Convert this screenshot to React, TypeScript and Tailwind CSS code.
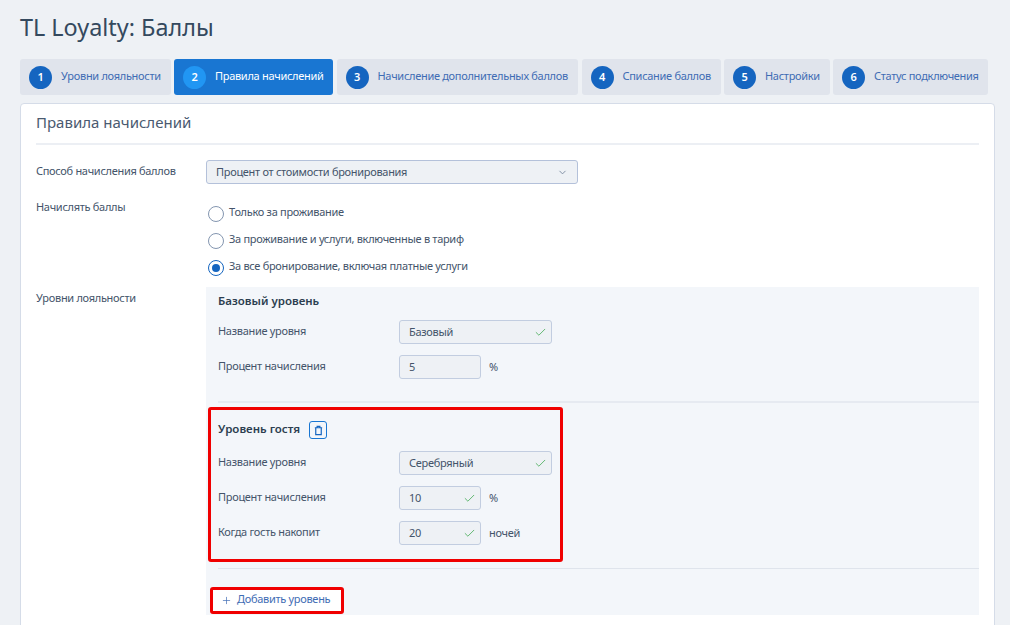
import { ChevronDown, Check, Plus } from 'lucide-react';
import { clsx } from 'clsx';

const TABS = [
  { n: 1, label: 'Уровни лояльности', w: 'w-[150.5px]' },
  { n: 2, label: 'Правила начислений', w: 'w-[159px]', active: true },
  { n: 3, label: 'Начисление дополнительных баллов', w: 'w-[241.5px]' },
  { n: 4, label: 'Списание баллов', w: 'w-[139px]' },
  { n: 5, label: 'Настройки', w: 'w-[105.5px]' },
  { n: 6, label: 'Статус подключения', w: 'w-[155px]' },
];

const RADIOS = [
  { label: 'Только за проживание' },
  { label: 'За проживание и услуги, включенные в тариф' },
  { label: 'За все бронирование, включая платные услуги', on: true },
];

const TXT = 'text-[11px] tracking-[-0.3px]';

function Field({
  label,
  value,
  wide,
  ok,
  unit,
}: {
  label: string;
  value: string;
  wide?: boolean;
  ok?: boolean;
  unit?: string;
}) {
  return (
    <div className="flex items-center h-[24px]">
      <span className={clsx('w-[181px] text-[#44546a] -mt-[1px]', TXT)}>{label}</span>
      <div
        className={clsx(
          'h-[24px] rounded-[3px] border border-[#c2cde0] bg-[#eef1f5] flex items-center justify-between pl-[9px] pr-[4px] text-[#44546a]',
          TXT,
          wide ? 'w-[153px]' : 'w-[82px]',
        )}
      >
        <span>{value}</span>
        {ok && <Check className="w-[13px] h-[13px] text-[#5cb56c]" strokeWidth={1.75} />}
      </div>
      {unit && <span className={clsx('ml-[8px] text-[#44546a]', TXT)}>{unit}</span>}
    </div>
  );
}

export default function App() {
  return (
    <div className="h-[625px] overflow-hidden bg-[#eef1f5] px-[20px] pr-[15px] font-['Noto_Sans','Open_Sans',sans-serif]">
      <h1 className="pt-[10px] h-[59px] text-[23.4px] leading-[34px] text-[#34495e]">TL Loyalty: Баллы</h1>

      <div className="flex gap-[3.5px]">
        {TABS.map((t) => (
          <div
            key={t.n}
            className={clsx(
              'h-[36px] shrink-0 rounded-[3px] flex items-center pl-[9px] whitespace-nowrap',
              TXT,
              t.w,
              t.active ? 'bg-[#1976d2] text-white' : 'bg-[#e0e4ec] text-[#3f6cb4]',
            )}
          >
            <span
              className={clsx(
                'w-[23px] h-[23px] shrink-0 rounded-full flex items-center justify-center text-[11px] font-semibold mr-[9px]',
                t.active ? 'bg-[#2196f3] text-white font-normal' : 'bg-[#1565c0] text-white',
              )}
            >
              {t.n}
            </span>
            <span className="-mt-[2px]">{t.label}</span>
          </div>
        ))}
      </div>

      <div className="mt-[8px] h-[600px] rounded-[4px] border border-[#d5dce8] bg-white px-[15px]">
        <h2 className="pt-[7px] h-[41px] text-[15px] leading-[22px] text-[#4a5a70] border-b-2 border-[#eceff4]">
          Правила начислений
        </h2>

        <div className="mt-[15px] flex items-center">
          <span className={clsx('w-[170px] text-[#44546a] -mt-[2px]', TXT)}>Способ начисления баллов</span>
          <div className={clsx('w-[372px] h-[24px] rounded-[3px] border border-[#b4c1da] bg-[#eef1f5] flex items-center justify-between pl-[9px] pr-[9px] text-[#44546a]', TXT)}>
            <span>Процент от стоимости бронирования</span>
            <ChevronDown className="w-[11px] h-[11px] text-[#7a8aa0]" />
          </div>
        </div>

        <div className="mt-[9px] flex">
          <span className={clsx('w-[170px] leading-[18px] text-[#44546a] mt-[5px]', TXT)}>Начислять баллы</span>
          <div className="flex flex-col pt-[7px] pl-[2px]">
            {RADIOS.map((r) => (
              <div key={r.label} className={clsx('h-[27px] flex items-center text-[#44546a]', TXT)}>
                <span
                  className={clsx(
                    'w-[16px] h-[16px] rounded-full border-[1.5px] mr-[5px] flex items-center justify-center bg-white shrink-0',
                    r.on ? 'border-[#1565c0]' : 'border-[#8496b0]',
                  )}
                >
                  {r.on && <span className="w-[8px] h-[8px] rounded-full bg-[#1565c0]" />}
                </span>
                <span className="-mt-[2px]">{r.label}</span>
              </div>
            ))}
          </div>
        </div>

        <div className="flex mt-[6px]">
          <span className={clsx('w-[170px] leading-[18px] text-[#44546a] mt-[2px]', TXT)}>Уровни лояльности</span>
          <div className="w-[773px] h-[328px] bg-[#f3f6fa] pl-[12px]">
            <h3 className="pt-[5px] h-[33px] text-[11.5px] leading-[18px] font-semibold text-[#2c3e50]">Базовый уровень</h3>
            <div className="flex flex-col gap-[11px]">
              <Field label="Название уровня" value="Базовый" wide ok />
              <Field label="Процент начисления" value="5" unit="%" />
            </div>
            <div className="mt-[22px] border-t-2 border-[#e6eaf1]" />

            {/* red annotation frames from the original screenshot */}
            <div className="-ml-[10px] mt-[4px] w-[355px] h-[155px] rounded-[3px] border-[3px] border-[#f00000] pl-[7px] pt-[10px]">
              <div className="flex items-center h-[20px]">
                <h3 className="text-[11.5px] font-semibold text-[#2c3e50] -mt-[2px]">Уровень гостя</h3>
                <span className="ml-[9px] w-[18px] h-[18px] rounded-[3px] border border-[#1976d2] flex items-center justify-center">
                  <svg viewBox="0 0 12 12" className="w-[11px] h-[11px] text-[#1565c0]" fill="none" stroke="currentColor" strokeWidth="1.3">
                    <path d="M2 3h8M4.5 3V1.5h3V3M3 3v7.5h6V3" />
                  </svg>
                </span>
              </div>
              <div className="mt-[11px] flex flex-col gap-[11px]">
                <Field label="Название уровня" value="Серебряный" wide ok />
                <Field label="Процент начисления" value="10" ok unit="%" />
                <Field label="Когда гость накопит" value="20" ok unit="ночей" />
              </div>
            </div>
            <div className="mt-[6px] border-t border-[#dfe4ec]" />
            <div className={clsx('-ml-[8px] mt-[18px] w-[134px] h-[27px] rounded-[3px] border-[3px] border-[#f00000] bg-white flex items-center pl-[8px] text-[#3f6cb4]', TXT)}>
              <Plus className="w-[11px] h-[11px] mr-[5px] text-[#3f6cb4]" strokeWidth={1.5} />
              <span className="-mt-[2px]">Добавить уровень</span>
            </div>
          </div>
        </div>
      </div>
    </div>
  );
}
